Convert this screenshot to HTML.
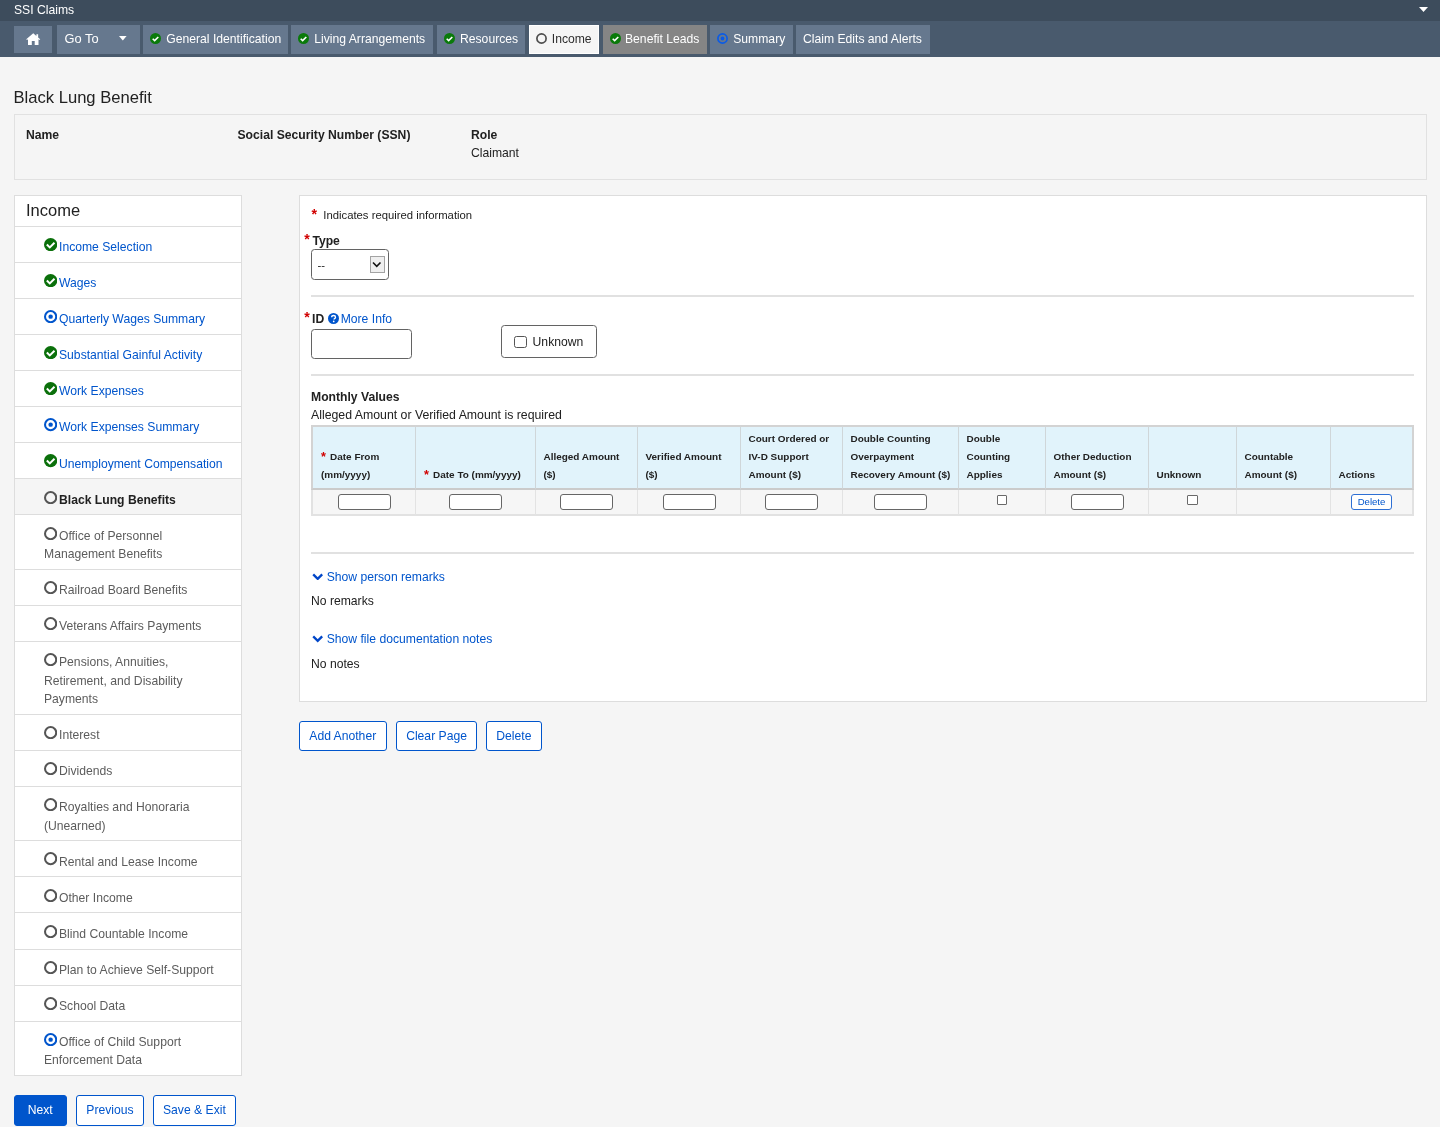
<!DOCTYPE html>
<html lang="en">
<head>
<meta charset="utf-8">
<title>SSI Claims - Black Lung Benefit</title>
<style>
*{box-sizing:border-box;margin:0;padding:0}
html,body{width:1440px;height:1127px;overflow:hidden}
body{font-family:"Liberation Sans",sans-serif;font-size:12.17px;line-height:18.26px;color:#212121;background:#f5f5f5;position:relative}
a{color:#0055cc;text-decoration:none}
svg{display:block}
.abs{position:absolute}
#page{position:absolute;left:0;top:0;width:1440px;height:1127px;will-change:transform}
/* top bars */
#topbar{left:0;top:0;width:1440px;height:21px;background:#3d4c5c;color:#fff}
#topbar .ttl{position:absolute;left:14px;top:1px;font-size:12.17px;line-height:18px;color:#fff}
#navbar{left:0;top:21px;width:1440px;height:36px;background:#495a6d}
.tab{position:absolute;top:4px;height:29px;background:#66788e;color:#fff;font-size:12.17px;line-height:29px;white-space:nowrap}
.tab .ic{position:absolute;top:8px}
.tab .tx{position:absolute;top:0}
/* headings */
#h1{left:13.5px;top:86.5px;font-size:16.6px;line-height:22px;color:#212121;white-space:nowrap}
#person{left:14px;top:114px;width:1412.5px;height:66px;border:1px solid #e1e1e1;background:#f5f5f5}
#person b{position:absolute;top:11px;white-space:nowrap}
#person span{position:absolute;top:29px;white-space:nowrap}
/* sidebar */
#side{left:13.5px;top:194.5px;width:228.5px;border:1px solid #dddddd;background:#fff}
#side .hd{height:30px;padding:3.75px 0 0 11.5px;font-size:16.5px;line-height:22px;color:#212121}
#side .it{border-top:1px solid #dddddd;padding:11.45px 8px 5.41px 29.5px;color:#5c5c5c}
#side .it.cur{background:#f5f5f5;color:#212121;font-weight:bold}
#side .it i{display:inline-block;width:13.25px;height:13px;vertical-align:-1.5px;margin-right:1.75px;position:relative;top:-1.7px}
#side .it a{color:#0055cc}
/* main */
#main{left:298.5px;top:194.5px;width:1128px;height:507.5px;border:1px solid #dddddd;background:#fff}
.req{color:#d10000;font-weight:bold}
#main>.abs>.req{font-size:14.2px}
.hr{position:absolute;left:11.5px;width:1103px;height:2px;background:#e1e1e1}
.btn{position:absolute;height:30.5px;border:1px solid #0055cc;border-radius:3px;background:#fff;color:#0055cc;font-size:12.17px;line-height:28.5px;text-align:center;white-space:nowrap}
.btn.pri{background:#0055cc;color:#fff}
/* table */
#tw{position:absolute;left:11.5px;top:229.5px;width:1103px}
#tbl{width:1103px;border-collapse:separate;border-spacing:0;table-layout:fixed}
#tbl th{background:#e1f3fb;font-size:9.96px;line-height:18.26px;font-weight:bold;text-align:left;vertical-align:bottom;padding:0 2px 3.4px 7.5px;border-left:1px solid #cfd6d9;border-top:2px solid #d3d3d3;border-bottom:2px solid #cbcbcb;height:65px;color:#212121;white-space:nowrap}
#tbl th:first-child{border-left:2px solid #d3d3d3;padding-left:8px}
#tbl th:last-child{border-right:2px solid #d3d3d3}
#tbl td{background:#f6f6f6;height:26px;border-left:1px solid #e3e3e3;border-bottom:2px solid #e2e2e2;text-align:center;vertical-align:top;padding:0}
#tbl td:first-child{border-left:2px solid #e2e2e2}
#tbl td:last-child{border-right:2px solid #e2e2e2}
#tbl .req{font-size:12.6px;margin-right:1.4px;position:relative;top:.6px}
.ti{display:block;width:53px;height:15.5px;border:1px solid #666;border-radius:3px;background:#fff;margin:4.3px auto 0}
.del{display:block;width:40.5px;height:15.5px;margin:4.45px auto 0;border:1px solid #2d6fd4;border-radius:3px;background:#fff;color:#0055cc;font-size:9.6px;line-height:13.5px;text-align:center}
.cb{display:block;width:10.3px;height:10.3px;border:1px solid #6a6a6a;border-radius:1px;background:#fff;margin:5.2px auto 0}
</style>
</head>
<body>
<div id="page">

<div id="topbar" class="abs">
  <div class="ttl">SSI Claims</div>
  <svg class="abs" style="left:1418.5px;top:7px" width="9" height="5" viewBox="0 0 9 5"><path d="M0 0h9L4.5 5z" fill="#fff"/></svg>
</div>

<div id="navbar" class="abs">
  <div class="tab" style="left:14px;width:38px;top:5px;height:27px">
    <svg class="abs" style="left:12px;top:7px" width="14.5" height="12.5" viewBox="0 0 29 25"><path fill="#fff" d="M14.5 0.5 L0.5 12.5 L2 14.2 L4 12.6 V24 H11.6 V16 H17.4 V24 H25 V12.6 L27 14.2 L28.5 12.5 L24.3 8.9 V2.4 H20.8 V5.9 Z"/></svg>
  </div>
  <div class="tab" style="left:57px;width:83px">
    <span class="tx" style="left:7.5px;top:-0.8px;font-size:12.85px">Go To</span>
    <svg class="abs" style="left:62.2px;top:11px" width="7.6" height="4.5" viewBox="0 0 8 4.5"><path d="M0 0h8L4 4.5z" fill="#fff"/></svg>
  </div>
  <div class="tab" style="left:143px;width:145px;"><svg class="ic" style="left:7px" width="11" height="11" viewBox="0 0 22 22"><circle cx="11" cy="11" r="11" fill="#0a7a0a"/><path d="M5.4 11.4l3.9 3.9 7.3-7.3" fill="none" stroke="#fff" stroke-width="3.2"/></svg><span class="tx" style="left:23.30px">General Identification</span></div>
  <div class="tab" style="left:291.25px;width:142px;"><svg class="ic" style="left:7px" width="11" height="11" viewBox="0 0 22 22"><circle cx="11" cy="11" r="11" fill="#0a7a0a"/><path d="M5.4 11.4l3.9 3.9 7.3-7.3" fill="none" stroke="#fff" stroke-width="3.2"/></svg><span class="tx" style="left:23.05px">Living Arrangements</span></div>
  <div class="tab" style="left:436.75px;width:88.25px;"><svg class="ic" style="left:7px" width="11" height="11" viewBox="0 0 22 22"><circle cx="11" cy="11" r="11" fill="#0a7a0a"/><path d="M5.4 11.4l3.9 3.9 7.3-7.3" fill="none" stroke="#fff" stroke-width="3.2"/></svg><span class="tx" style="left:23.25px">Resources</span></div>
  <div class="tab" style="left:528.75px;width:70px;background:#f5f5f5;box-shadow:inset 0 0 0 1px #fff;color:#2e2e2e;"><svg class="ic" style="left:7px" width="11" height="11" viewBox="0 0 22 22"><circle cx="11" cy="11" r="9.2" fill="none" stroke="#4d4d4d" stroke-width="3.4"/></svg><span class="tx" style="left:23.00px">Income</span></div>
  <div class="tab" style="left:602.5px;width:104.25px;background:#858585;"><svg class="ic" style="left:7px" width="11" height="11" viewBox="0 0 22 22"><circle cx="11" cy="11" r="11" fill="#0a7a0a"/><path d="M5.4 11.4l3.9 3.9 7.3-7.3" fill="none" stroke="#fff" stroke-width="3.2"/></svg><span class="tx" style="left:22.50px">Benefit Leads</span></div>
  <div class="tab" style="left:710px;width:82.5px;"><svg class="ic" style="left:7px" width="11" height="11" viewBox="0 0 22 22"><circle cx="11" cy="11" r="9.2" fill="none" stroke="#0a5be6" stroke-width="3.4"/><circle cx="11" cy="11" r="3.8" fill="#0a5be6"/></svg><span class="tx" style="left:23.25px">Summary</span></div>
  <div class="tab" style="left:795.75px;width:134.25px;"><span class="tx" style="left:7.25px">Claim Edits and Alerts</span></div>
</div>

<div id="h1" class="abs">Black Lung Benefit</div>

<div id="person" class="abs">
  <b style="left:11px">Name</b>
  <b style="left:222.5px">Social Security Number (SSN)</b>
  <b style="left:456px">Role</b>
  <span style="left:456px">Claimant</span>
</div>

<div id="side" class="abs">
  <div class="hd">Income</div>
  <div class="it"><i><svg width="13.25" height="13.25" viewBox="0 0 22 22"><circle cx="11" cy="11" r="11" fill="#0b700b"/><path d="M4.7 10.9L9.6 15.7L17.4 7.9" fill="none" stroke="#fff" stroke-width="3.3"/></svg></i><a>Income Selection</a></div>
  <div class="it"><i><svg width="13.25" height="13.25" viewBox="0 0 22 22"><circle cx="11" cy="11" r="11" fill="#0b700b"/><path d="M4.7 10.9L9.6 15.7L17.4 7.9" fill="none" stroke="#fff" stroke-width="3.3"/></svg></i><a>Wages</a></div>
  <div class="it"><i><svg width="13.25" height="13.25" viewBox="0 0 22 22"><circle cx="11" cy="11" r="9.3" fill="none" stroke="#0055cc" stroke-width="3.4"/><circle cx="11" cy="11" r="3.7" fill="#0055cc"/></svg></i><a>Quarterly Wages Summary</a></div>
  <div class="it"><i><svg width="13.25" height="13.25" viewBox="0 0 22 22"><circle cx="11" cy="11" r="11" fill="#0b700b"/><path d="M4.7 10.9L9.6 15.7L17.4 7.9" fill="none" stroke="#fff" stroke-width="3.3"/></svg></i><a>Substantial Gainful Activity</a></div>
  <div class="it"><i><svg width="13.25" height="13.25" viewBox="0 0 22 22"><circle cx="11" cy="11" r="11" fill="#0b700b"/><path d="M4.7 10.9L9.6 15.7L17.4 7.9" fill="none" stroke="#fff" stroke-width="3.3"/></svg></i><a>Work Expenses</a></div>
  <div class="it"><i><svg width="13.25" height="13.25" viewBox="0 0 22 22"><circle cx="11" cy="11" r="9.3" fill="none" stroke="#0055cc" stroke-width="3.4"/><circle cx="11" cy="11" r="3.7" fill="#0055cc"/></svg></i><a>Work Expenses Summary</a></div>
  <div class="it"><i><svg width="13.25" height="13.25" viewBox="0 0 22 22"><circle cx="11" cy="11" r="11" fill="#0b700b"/><path d="M4.7 10.9L9.6 15.7L17.4 7.9" fill="none" stroke="#fff" stroke-width="3.3"/></svg></i><a>Unemployment Compensation</a></div>
  <div class="it cur"><i><svg width="13.25" height="13.25" viewBox="0 0 22 22"><circle cx="11" cy="11" r="9.3" fill="none" stroke="#555" stroke-width="3.4"/></svg></i>Black Lung Benefits</div>
  <div class="it"><i><svg width="13.25" height="13.25" viewBox="0 0 22 22"><circle cx="11" cy="11" r="9.3" fill="none" stroke="#555" stroke-width="3.4"/></svg></i>Office of Personnel<br>Management Benefits</div>
  <div class="it"><i><svg width="13.25" height="13.25" viewBox="0 0 22 22"><circle cx="11" cy="11" r="9.3" fill="none" stroke="#555" stroke-width="3.4"/></svg></i>Railroad Board Benefits</div>
  <div class="it"><i><svg width="13.25" height="13.25" viewBox="0 0 22 22"><circle cx="11" cy="11" r="9.3" fill="none" stroke="#555" stroke-width="3.4"/></svg></i>Veterans Affairs Payments</div>
  <div class="it"><i><svg width="13.25" height="13.25" viewBox="0 0 22 22"><circle cx="11" cy="11" r="9.3" fill="none" stroke="#555" stroke-width="3.4"/></svg></i>Pensions, Annuities,<br>Retirement, and Disability<br>Payments</div>
  <div class="it"><i><svg width="13.25" height="13.25" viewBox="0 0 22 22"><circle cx="11" cy="11" r="9.3" fill="none" stroke="#555" stroke-width="3.4"/></svg></i>Interest</div>
  <div class="it"><i><svg width="13.25" height="13.25" viewBox="0 0 22 22"><circle cx="11" cy="11" r="9.3" fill="none" stroke="#555" stroke-width="3.4"/></svg></i>Dividends</div>
  <div class="it"><i><svg width="13.25" height="13.25" viewBox="0 0 22 22"><circle cx="11" cy="11" r="9.3" fill="none" stroke="#555" stroke-width="3.4"/></svg></i>Royalties and Honoraria<br>(Unearned)</div>
  <div class="it"><i><svg width="13.25" height="13.25" viewBox="0 0 22 22"><circle cx="11" cy="11" r="9.3" fill="none" stroke="#555" stroke-width="3.4"/></svg></i>Rental and Lease Income</div>
  <div class="it"><i><svg width="13.25" height="13.25" viewBox="0 0 22 22"><circle cx="11" cy="11" r="9.3" fill="none" stroke="#555" stroke-width="3.4"/></svg></i>Other Income</div>
  <div class="it"><i><svg width="13.25" height="13.25" viewBox="0 0 22 22"><circle cx="11" cy="11" r="9.3" fill="none" stroke="#555" stroke-width="3.4"/></svg></i>Blind Countable Income</div>
  <div class="it"><i><svg width="13.25" height="13.25" viewBox="0 0 22 22"><circle cx="11" cy="11" r="9.3" fill="none" stroke="#555" stroke-width="3.4"/></svg></i>Plan to Achieve Self-Support</div>
  <div class="it"><i><svg width="13.25" height="13.25" viewBox="0 0 22 22"><circle cx="11" cy="11" r="9.3" fill="none" stroke="#555" stroke-width="3.4"/></svg></i>School Data</div>
  <div class="it"><i><svg width="13.25" height="13.25" viewBox="0 0 22 22"><circle cx="11" cy="11" r="9.3" fill="none" stroke="#0055cc" stroke-width="3.4"/><circle cx="11" cy="11" r="3.7" fill="#0055cc"/></svg></i>Office of Child Support<br>Enforcement Data</div>
</div>

<div id="main" class="abs">
  <div class="abs" style="left:11.95px;top:9.40px;white-space:nowrap;font-size:12.17px"><span class="req">*</span></div>
  <div class="abs" style="left:23.80px;top:10.50px;white-space:nowrap;font-size:11.31px">Indicates required information</div>
  <div class="abs" style="left:4.80px;top:34.30px;white-space:nowrap;"><span class="req">*</span></div>
  <div class="abs" style="left:12.90px;top:36.80px;white-space:nowrap;"><b>Type</b></div>
  <div class="abs" style="left:11.5px;top:53.80px;width:77.7px;height:30.7px;border:1px solid #636363;border-radius:3.5px;background:#fff">
    <span class="abs" style="left:5.5px;top:6px;font-size:11.3px">--</span>
    <span class="abs" style="left:57.6px;top:5.6px;width:15.4px;height:17.6px;border:1px solid #a3a3a3;background:#efefef"></span>
    <svg class="abs" style="left:60.4px;top:10.8px" width="9.5" height="6.6" viewBox="0 0 19 13.2"><path d="M2 3l7.5 7.5L17 3" fill="none" stroke="#111" stroke-width="3.2"/></svg>
  </div>
  <div class="hr" style="top:99.5px"></div>
  <div class="abs" style="left:4.80px;top:112.80px;white-space:nowrap;"><span class="req">*</span></div>
  <div class="abs" style="left:12.50px;top:114.50px;white-space:nowrap;"><b>ID</b></div>
  <svg class="abs" style="left:28.20px;top:117.5px" width="11" height="11" viewBox="0 0 22 22"><circle cx="11" cy="11" r="11" fill="#0055cc"/><path d="M7.3 8.6c0-2.2 1.6-3.6 3.9-3.6 2.2 0 3.8 1.4 3.8 3.3 0 1.6-.9 2.3-2 3-.8.6-1 .9-1 1.9" fill="none" stroke="#fff" stroke-width="2.7"/><circle cx="11.4" cy="16.9" r="1.7" fill="#fff"/></svg>
  <div class="abs" style="left:41.20px;top:114.50px;white-space:nowrap;"><a>More Info</a></div>
  <div class="abs" style="left:11.5px;top:133.20px;width:100.7px;height:30.5px;border:1px solid #636363;border-radius:3.5px;background:#fff"></div>
  <div class="abs" style="left:201.80px;top:129.90px;width:95.5px;height:32.4px;border:1px solid #636363;border-radius:3.5px;background:#fff">
    <span class="abs" style="left:12.2px;top:9.6px;width:12.1px;height:12.2px;border:1.2px solid #555;border-radius:2.5px;background:#fff"></span>
    <span class="abs" style="left:30.3px;top:6.3px;white-space:nowrap">Unknown</span>
  </div>
  <div class="hr" style="top:178.5px"></div>
  <div class="abs" style="left:11.50px;top:192.80px;white-space:nowrap;"><b>Monthly Values</b></div>
  <div class="abs" style="left:11.50px;top:210.50px;white-space:nowrap;font-size:12.31px">Alleged Amount or Verified Amount is required</div>
  <div id="tw"><table id="tbl"><colgroup><col style="width:104px"><col style="width:120px"><col style="width:102px"><col style="width:103px"><col style="width:102px"><col style="width:116px"><col style="width:87px"><col style="width:103px"><col style="width:88px"><col style="width:94px"><col style="width:84px"></colgroup>
   <tr><th><span class="req">*</span> Date From<br>(mm/yyyy)</th><th><span class="req" style="margin-left:.5px">*</span> Date To (mm/yyyy)</th><th>Alleged Amount<br>($)</th><th>Verified Amount<br>($)</th><th>Court Ordered or<br>IV-D Support<br>Amount ($)</th><th>Double Counting<br>Overpayment<br>Recovery Amount ($)</th><th>Double<br>Counting<br>Applies</th><th>Other Deduction<br>Amount ($)</th><th>Unknown</th><th>Countable<br>Amount ($)</th><th>Actions</th></tr>
   <tr><td><span class="ti"></span></td><td><span class="ti"></span></td><td><span class="ti"></span></td><td><span class="ti"></span></td><td><span class="ti"></span></td><td><span class="ti"></span></td><td><span class="cb"></span></td><td><span class="ti"></span></td><td><span class="cb"></span></td><td></td><td><span class="del">Delete</span></td></tr>
  </table></div>
  <div class="hr" style="top:356.5px"></div>
  <svg class="abs" style="left:12.2px;top:377.2px" width="11.4" height="7.6" viewBox="0 0 22.8 15.2"><path d="M2.4 2.8L11.4 11.8L20.4 2.8" fill="none" stroke="#0046c8" stroke-width="4.6"/></svg>
  <div class="abs" style="left:27.20px;top:372.10px;white-space:nowrap;"><a>Show person remarks</a></div>
  <div class="abs" style="left:11.50px;top:396.80px;white-space:nowrap;">No remarks</div>
  <svg class="abs" style="left:12.2px;top:439.7px" width="11.4" height="7.6" viewBox="0 0 22.8 15.2"><path d="M2.4 2.8L11.4 11.8L20.4 2.8" fill="none" stroke="#0046c8" stroke-width="4.6"/></svg>
  <div class="abs" style="left:27.20px;top:434.80px;white-space:nowrap;"><a>Show file documentation notes</a></div>
  <div class="abs" style="left:11.50px;top:459.10px;white-space:nowrap;">No notes</div>
</div>

<div class="btn" style="left:299px;top:720.5px;width:87.5px">Add Another</div>
<div class="btn" style="left:396.3px;top:720.5px;width:80.5px">Clear Page</div>
<div class="btn" style="left:486px;top:720.5px;width:55.7px">Delete</div>
<div class="btn pri" style="left:13.75px;top:1095px;width:53px">Next</div>
<div class="btn" style="left:76.25px;top:1095px;width:67.5px">Previous</div>
<div class="btn" style="left:153px;top:1095px;width:82.75px">Save &amp; Exit</div>

</div>
</body>
</html>
